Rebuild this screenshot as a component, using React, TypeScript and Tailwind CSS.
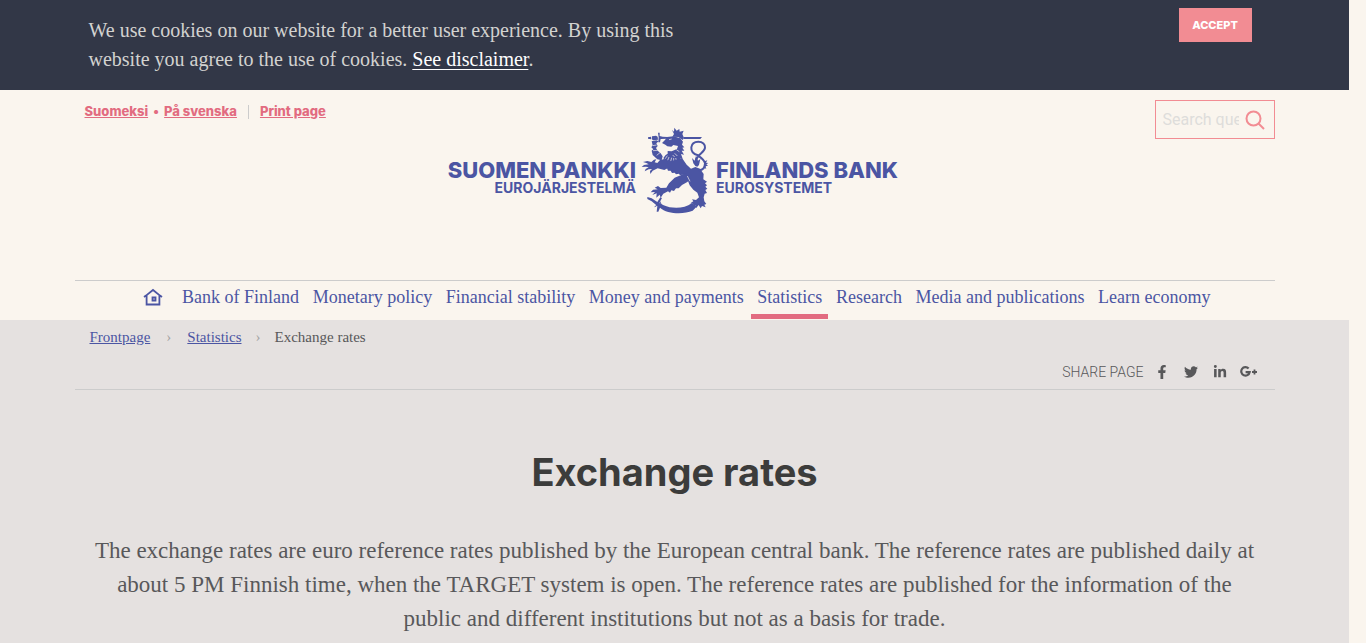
import { FaFacebookF, FaTwitter, FaLinkedinIn } from 'react-icons/fa';

const navItems = [
  'Bank of Finland',
  'Monetary policy',
  'Financial stability',
  'Money and payments',
  'Statistics',
  'Research',
  'Media and publications',
  'Learn economy',
];

const shareLinks = [
  { label: 'Facebook', icon: FaFacebookF },
  { label: 'Twitter', icon: FaTwitter },
  { label: 'LinkedIn', icon: FaLinkedinIn },
  { label: 'Google Plus', icon: GooglePlus },
];

function GooglePlus({ className }: { className?: string }) {
  return (
    <svg viewBox="0 0 18 14" className={className} fill="none" stroke="currentColor" strokeWidth="2.2">
      <path d="M8.6 3.6A4.2 4.2 0 1 0 9.6 7.2H5.6" />
      <path d="M14.5 4.5v5M12 7h5" strokeWidth="1.8" />
    </svg>
  );
}

function HomeIcon() {
  return (
    <svg viewBox="0 0 20 18" className="w-5 h-[18px]" fill="none" stroke="currentColor" strokeWidth="1.8">
      <path d="M1 9l2-1.4L10 2l7 5.6L19 9M3.6 7.5v9h12.8v-9" />
      <path d="M9.5 9.5h3v3h-3z" />
    </svg>
  );
}

function Lion() {
  return (
    <svg viewBox="0 0 216 276" className="w-[72px] h-[92px] shrink-0" fill="currentColor" aria-hidden="true">
      {/* Crown and sword */}
      <path d="M96 18l6 5 1-12 7 9 8-5 1 8 12-3-4 10 5 12-4 6-13-9-18-1 5-8z" />
      <path d="M131 39h55l-5 6h-50zM24 40l9-2v8l-9-2zM36 37l12-2 5 3 1 9-15 2-4-4zM54 26h5v10l9 2 14 1v5l-20 1-2 10h-5l1-15z" />
      {/* Raised arm */}
      <path d="M35 52l14-3 7 3-7 6 4 8-5 6 5 8 9 8 6 9-3 12-13-3-14-13-3-13 5-4-6-6 4-6z" />
      <path d="M38 65l12-2M39 80l14-1M50 94l10-8" stroke="#faf5ee" strokeWidth="2" />
      {/* Head and mane */}
      <path d="M66 57l9-9 6-9 20-2 20 6 8 10-3 9 7 8-6 1 6 9-8 0 7 12-9-2 5 14-7-2 4 13-9-1-8 9-28-7-10-14 7-9 6-4 0-8 12 1 16-7 3-9-14-3-6 5-12-1-6-5z" />
      <path d="M87 47l8-2M76 104l6-9M83 109l4-10M92 112l3-11M101 112v-10M110 111l-3-9M104 88l8 8M109 77l9 6M98 93l6 6" fill="none" stroke="#faf5ee" strokeWidth="2" />
      {/* Body, right hind leg and its foot */}
      <path d="M68 106L92 112L126 102L140 122L153 134L166 129L180 134L191 150L190 166L201 173L195 178L201 184L196 188L202 194L196 198L201 207L194 209L191 220L193 232L199 240L193 242L197 250L186 246L182 253L176 243L168 253L166 243L158 249L160 240L151 238L160 232L156 226L168 228L177 220L172 206L160 197L149 184L142 166L132 152L120 153L116 149L108 151L104 146L96 147L92 140L84 140L80 130Z" />
      {/* Front paw */}
      <path d="M77 105l-17 3-8 9-8-2 5-9-7 1-8 7-12-3-13 3 10 3 7 4-14 2-7 6 13-1 8 2-9 5-3 7 12-6 10-1-6 6 1 9 7-10 15-7 20 5 17-9z" />
      {/* Left hind leg */}
      <path d="M138 147L122 154L104 161L87 178L79 191L62 192L54 186L44 191L53 196L39 197L32 205L45 204L37 213L50 208L49 221L59 212L62 221L70 209L84 202L90 206L94 199L102 201L108 193L116 193L126 183L142 174L152 164Z" />
      <path d="M142 156l8 16" fill="none" stroke="#faf5ee" strokeWidth="2" />
      {/* Tail */}
      <path d="M166 126l-6-8-4-16 8 8 4-15 6 15 7-5-4 18-5 5z" />
      <path d="M174 94c-15-4-21-13-20-24 1-11 9-17 21-17 13 0 21 8 20 18-1 15-23 19-27 37M173 94c11 7 20 15 22 24 2 12-7 20-18 21" fill="none" stroke="currentColor" strokeWidth="6" />
      <path d="M193 112l9-3-4 7 7 1-6 4 5 4-8 2 3 7-9-3z" />
      {/* Scimitar */}
      <path d="M22 219l13 4 17 11 9-14 5 2-8 15 13 7c24 11 62 11 84-6l16 9-13 13c-28 12-77 10-98-9l-5 12h-5l2-17-17-14-13-7z" />
      <path d="M59 240l-15 8M58 230l6 12" stroke="currentColor" strokeWidth="3" />
    </svg>
  );
}

function CookieBar() {
  return (
    <div className="bg-[#323747] h-[90px]">
      <div className="max-w-[1200px] mx-auto flex justify-between items-start pl-[14px] pr-[23px]">
        <p className="w-[600px] pt-4 text-[20px] leading-[29px] text-[#d2d2d0]">
          We use cookies on our website for a better user experience. By using this website you agree to the use of cookies.{' '}
          <a href="#disclaimer" className="text-white underline decoration-1 underline-offset-3">See disclaimer</a>.
        </p>
        <button className="mt-2 w-[73px] h-[34px] bg-[#f28c93] text-white font-['Inter',sans-serif] font-extrabold text-[11px]">
          ACCEPT
        </button>
      </div>
    </div>
  );
}

function Header() {
  return (
    <header className="w-full max-w-[1200px] mx-auto">
      <div className="flex justify-between items-start pt-[10px] pl-[10px] h-[34px]">
        <div className="flex items-center h-6 font-['Inter',sans-serif] text-[13px] font-extrabold text-[#e26b80]">
          <a href="#fi" className="underline">Suomeksi</a>
          <span className="w-4 text-center">•</span>
          <a href="#sv" className="underline">På svenska</a>
          <span className="w-px h-[14px] mx-[11px] bg-[#cccccc]" />
          <a href="#print" className="underline">Print page</a>
        </div>
        <form className="flex items-center w-[120px] h-[39px] border border-[#f28c93] pl-[7px]" onSubmit={(e) => e.preventDefault()}>
          <input
            type="text"
            aria-label="Search"
            placeholder="Search query"
            className="w-[76px] bg-transparent text-[16px] font-['Roboto',sans-serif] placeholder:text-[#dedddb] outline-none"
          />
          <button aria-label="Search" className="ml-[6px] text-[#f28c93]">
            <svg viewBox="0 0 20 20" className="w-5 h-5" fill="none" stroke="currentColor" strokeWidth="2">
              <circle cx="8.5" cy="8.5" r="7" />
              <path d="M13.5 13.5l5.5 5.5" />
            </svg>
          </button>
        </form>
      </div>

      <a href="#home" aria-label="Suomen Pankki" className="grid grid-cols-[1fr_72px_1fr] gap-x-1 pl-[3px] text-[#4b55a3] font-['Inter',sans-serif]">
        <span className="pt-9 text-right">
          <span className="block text-[22px] leading-5 font-extrabold">SUOMEN PANKKI</span>
          <span className="block text-[14px] leading-4 font-bold">EUROJÄRJESTELMÄ</span>
        </span>
        <Lion />
        <span className="pt-9">
          <span className="block text-[22px] leading-5 font-extrabold">FINLANDS BANK</span>
          <span className="block text-[14px] leading-4 font-bold">EUROSYSTEMET</span>
        </span>
      </a>

      <nav className="mt-16 border-t border-[#cccccc] flex justify-between pl-[68px] pr-[58px] h-10 text-[18px] text-[#4b55a3]">
        <a href="#home" aria-label="Home" className="pt-[7px] mr-3"><HomeIcon /></a>
        {navItems.map((item) => (
          <a
            key={item}
            href="#"
            className={`px-[6px] pt-1 leading-6 h-[38px] whitespace-nowrap ${item === 'Statistics' ? 'border-b-[5px] border-[#e26b80]' : ''}`}
          >
            {item}
          </a>
        ))}
      </nav>
    </header>
  );
}

export default function App() {
  return (
    <div className="min-h-screen flex flex-col pr-[17px] bg-[#faf5ee] font-['Liberation_Serif',serif]">
      <CookieBar />
      <Header />
      <main className="grow bg-[#e5e1e0] text-[#58585a]">
        <div className="max-w-[1200px] mx-auto">
          <div className="border-b border-[#cccccc] h-[70px]">
            <div className="flex items-center pl-[15px] pt-[5px] text-[15px] leading-6">
              <a href="#home" className="text-[#4b55a3] underline">Frontpage</a>
              <span className="w-[37px] text-center text-[#a5a5a5]">›</span>
              <a href="#statistics" className="text-[#4b55a3] underline">Statistics</a>
              <span className="w-[33px] text-center text-[#a5a5a5]">›</span>
              <span>Exchange rates</span>
            </div>
            <div className="flex justify-end items-center pt-[11px] pr-[11px]">
              <span className="font-['Roboto',sans-serif] font-light text-[14px] leading-6 mr-1">SHARE PAGE</span>
              {shareLinks.map((link) => (
                <a key={link.label} href="#share" aria-label={link.label} className="w-[29px] flex justify-center">
                  <link.icon className="h-[14px]" />
                </a>
              ))}
            </div>
          </div>
          <h1 className="mt-14 text-center font-['Inter',sans-serif] font-bold text-[38px] leading-[52px] text-[#3c3c3b]">
            Exchange rates
          </h1>
          <p className="mt-9 px-[15px] text-center text-[23px] leading-[34px]">
            The exchange rates are euro reference rates published by the European central bank. The reference rates are published daily at about 5 PM Finnish time, when the TARGET system is open. The reference rates are published for the information of the public and different institutions but not as a basis for trade.
          </p>
        </div>
      </main>
    </div>
  );
}
